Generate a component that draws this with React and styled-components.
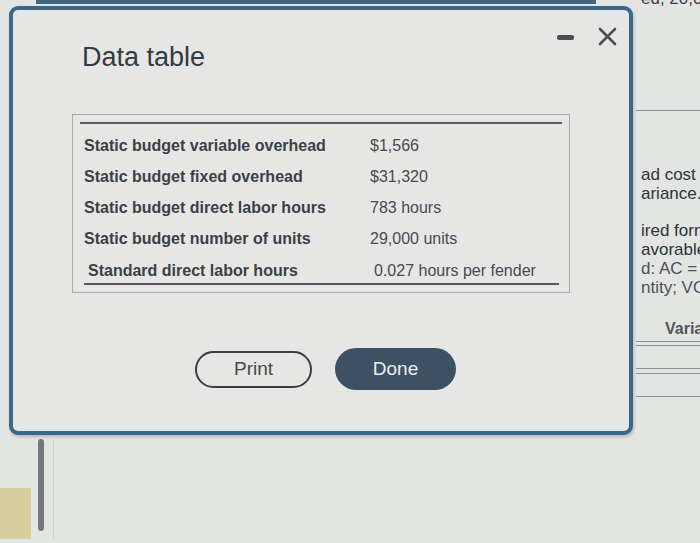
import React from "react";
import styled, { createGlobalStyle } from "styled-components";

const rows = [
  ["Static budget variable overhead", "$1,566"],
  ["Static budget fixed overhead", "$31,320"],
  ["Static budget direct labor hours", "783 hours"],
  ["Static budget number of units", "29,000 units"],
  ["Standard direct labor hours", "0.027 hours per fender"],
];

function App() {
  return (
    <>
      <GlobalStyle />
      <Screen>
        <TopStrip />
        <Backdrop>
          <LeftPane>
            <BottomArea>
              <YellowBlock />
              <ScrollBar />
              <FaintLine />
            </BottomArea>
          </LeftPane>
          <RightPane>
            <CutText>ed, 20,0</CutText>
            <Rule $top={102} />
            <SideText $top={54}>ad cost v</SideText>
            <SideText>ariance.</SideText>
            <SideText $top={18}>ired form</SideText>
            <SideText>avorable</SideText>
            <SideText $light>d: AC = a</SideText>
            <SideText $light>ntity; VOI</SideText>
            <SideHeading>Varia</SideHeading>
            <Rule $top={3} />
            <Rule $top={3} />
            <Rule $top={22} />
            <Rule $top={4} />
            <Rule $top={22} />
          </RightPane>
        </Backdrop>

        <Dialog>
          <Header>
            <Title>Data table</Title>
            <WindowButtons>
              <MinimizeIcon />
              <svg width="19" height="19" viewBox="0 0 19 19">
                <path
                  d="M2 2 L17 17 M17 2 L2 17"
                  stroke="#4a4f56"
                  strokeWidth="2.6"
                  strokeLinecap="round"
                />
              </svg>
            </WindowButtons>
          </Header>

          <TableBox>
            <TopLine />
            {rows.map(([label, value], i) => (
              <Row key={label} $last={i === rows.length - 1}>
                <Label>{label}</Label>
                <Value>{value}</Value>
              </Row>
            ))}
          </TableBox>

          <Buttons>
            <OutlineButton>Print</OutlineButton>
            <FilledButton>Done</FilledButton>
          </Buttons>
        </Dialog>
      </Screen>
    </>
  );
}

export default App;

const GlobalStyle = createGlobalStyle`
  html, body {
    margin: 0;
    padding: 0;
    background: #e3e5e2;
  }
  body {
    font-family: "Liberation Sans", Arial, sans-serif;
  }
`;

const Screen = styled.div`
  position: relative;
  width: 700px;
  height: 543px;
  overflow: hidden;
  background: #e3e5e2;
`;

const TopStrip = styled.div`
  height: 4px;
  margin-left: 36px;
  width: 560px;
  background: #3f6584;
`;

const Backdrop = styled.div`
  display: flex;
  height: 539px;
  margin-top: -4px;
`;

const LeftPane = styled.div`
  width: 636px;
  display: flex;
  flex-direction: column;
  justify-content: flex-end;
`;

const BottomArea = styled.div`
  display: flex;
  align-items: flex-end;
  height: 100px;
`;

const YellowBlock = styled.div`
  width: 31px;
  height: 51px;
  background: #d7cea0;
`;

const ScrollBar = styled.div`
  align-self: flex-start;
  width: 6px;
  height: 92px;
  margin-left: 7px;
  border-radius: 3px;
  background: #76777c;
`;

const FaintLine = styled.div`
  align-self: flex-start;
  width: 1px;
  height: 100px;
  margin-left: 9px;
  background: #cfd1ce;
`;

const RightPane = styled.div`
  flex: 1;
  display: flex;
  flex-direction: column;
  padding-left: 5px;
  color: #33373c;
  font-size: 17px;
  white-space: nowrap;
  overflow: hidden;
`;

const CutText = styled.div`
  margin-top: -10px;
  line-height: 18px;
  font-size: 17px;
  color: #3a3e44;
`;

const Rule = styled.div`
  margin-top: ${(p) => p.$top}px;
  margin-left: -5px;
  height: 1px;
  background: #8e9195;
`;

const SideText = styled.div`
  margin-top: ${(p) => p.$top || 0}px;
  line-height: 19px;
  color: ${(p) => (p.$light ? "#4d5258" : "#2f3338")};
`;

const SideHeading = styled.div`
  margin-top: 22px;
  padding-left: 24px;
  line-height: 19px;
  font-size: 16px;
  font-weight: bold;
  color: #52565b;
`;

const Dialog = styled.div`
  position: absolute;
  left: 9px;
  top: 6px;
  width: 624px;
  height: 429px;
  box-sizing: border-box;
  border: 4px solid #3a6889;
  border-radius: 9px;
  background: #e6e7e4;
  box-shadow: 1px 2px 3px rgba(40, 60, 80, 0.25);
  display: flex;
  flex-direction: column;
  padding: 31px 12px 0 69px;
`;

const Header = styled.div`
  display: flex;
  justify-content: space-between;
  align-items: flex-start;
`;

const Title = styled.h1`
  margin: 0;
  font-size: 27px;
  line-height: 32px;
  font-weight: normal;
  color: #343b43;
`;

const WindowButtons = styled.div`
  display: flex;
  align-items: center;
  gap: 24px;
  margin-top: -14px;
`;

const MinimizeIcon = styled.div`
  width: 17px;
  height: 5px;
  margin-top: 2px;
  border-radius: 2px;
  background: #4a4f56;
`;

const TableBox = styled.div`
  margin-top: 41px;
  margin-left: -10px;
  width: 498px;
  box-sizing: border-box;
  border: 1px solid #a9abab;
  padding: 7px;
`;

const TopLine = styled.div`
  height: 2px;
  background: #5a5e63;
  margin-bottom: 6px;
`;

const Row = styled.div`
  display: flex;
  align-items: center;
  height: ${(p) => (p.$last ? 25 : 31)}px;
  padding-left: 4px;
  margin: ${(p) => (p.$last ? "0 3px 0 4px" : "0")};
  border-bottom: ${(p) => (p.$last ? "2px solid #55595e" : "none")};
  padding-top: ${(p) => (p.$last ? "4px" : "0")};
  font-size: 16px;
`;

const Label = styled.div`
  width: 286px;
  font-weight: bold;
  color: #3b4047;
`;

const Value = styled.div`
  color: #454a50;
`;

const Buttons = styled.div`
  display: flex;
  align-items: center;
  gap: 23px;
  margin-top: 55px;
  margin-left: 113px;
`;

const OutlineButton = styled.button`
  width: 117px;
  height: 37px;
  border: 2px solid #3b3d40;
  border-radius: 19px;
  background: transparent;
  font-family: "Liberation Sans", Arial, sans-serif;
  font-size: 19px;
  color: #45494e;
  padding: 0;
`;

const FilledButton = styled.button`
  width: 121px;
  height: 42px;
  border: none;
  border-radius: 21px;
  background: #3e5064;
  font-family: "Liberation Sans", Arial, sans-serif;
  font-size: 19px;
  color: #eceeef;
  padding: 0;
`;
